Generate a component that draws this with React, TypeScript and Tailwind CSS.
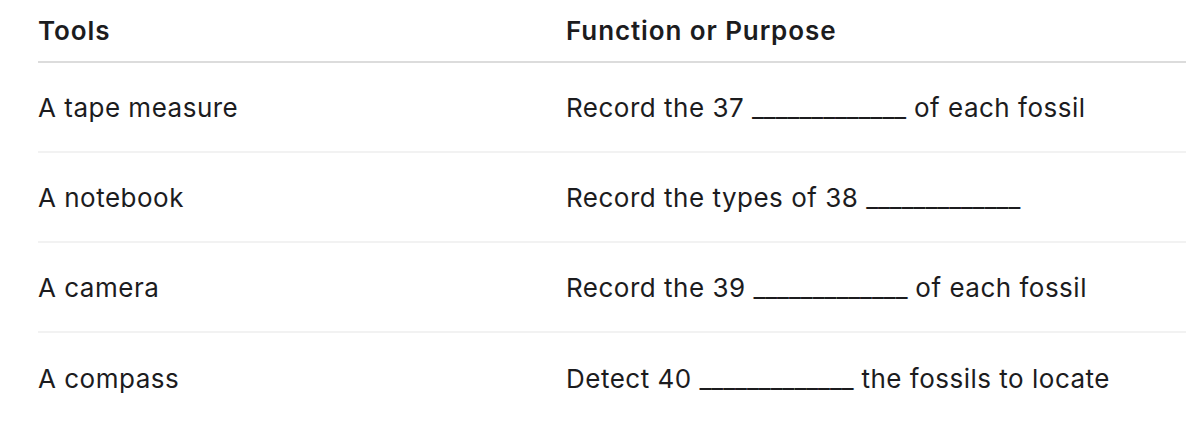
import React from "react";

const rows = [
  { tool: "A tape measure", before: "Record the 37", after: "of each fossil" },
  { tool: "A notebook", before: "Record the types of 38", after: "" },
  { tool: "A camera", before: "Record the 39", after: "of each fossil" },
  { tool: "A compass", before: "Detect 40", after: "the fossils to locate" },
];

const blank = "_____________";

function App() {
  return (
    <div className="w-[1186px] h-[444px] bg-white pl-[38px] font-['Inter','Liberation_Sans',sans-serif] text-[#1c1c1e] text-[26px] tracking-[0.5px]">
      {/* Header */}
      <div className="grid grid-cols-[528px_1fr] h-[63px] items-center border-b-2 border-[#dcdcdc] font-semibold tracking-[0.9px]">
        <div>Tools</div>
        <div>Function or Purpose</div>
      </div>

      {rows.map((r, i) => (
        <div
          key={r.tool}
          className={
            "grid grid-cols-[528px_1fr] h-[90px] items-center pt-[1px] " +
            (i < rows.length - 1 ? "border-b-2 border-[#f2f2f2]" : "")
          }
        >
          <div>{r.tool}</div>
          <div className="whitespace-pre">
            {r.before} <span className="tracking-normal">{blank}</span>
            {r.after ? " " + r.after : ""}
          </div>
        </div>
      ))}
    </div>
  );
}

export default App;
